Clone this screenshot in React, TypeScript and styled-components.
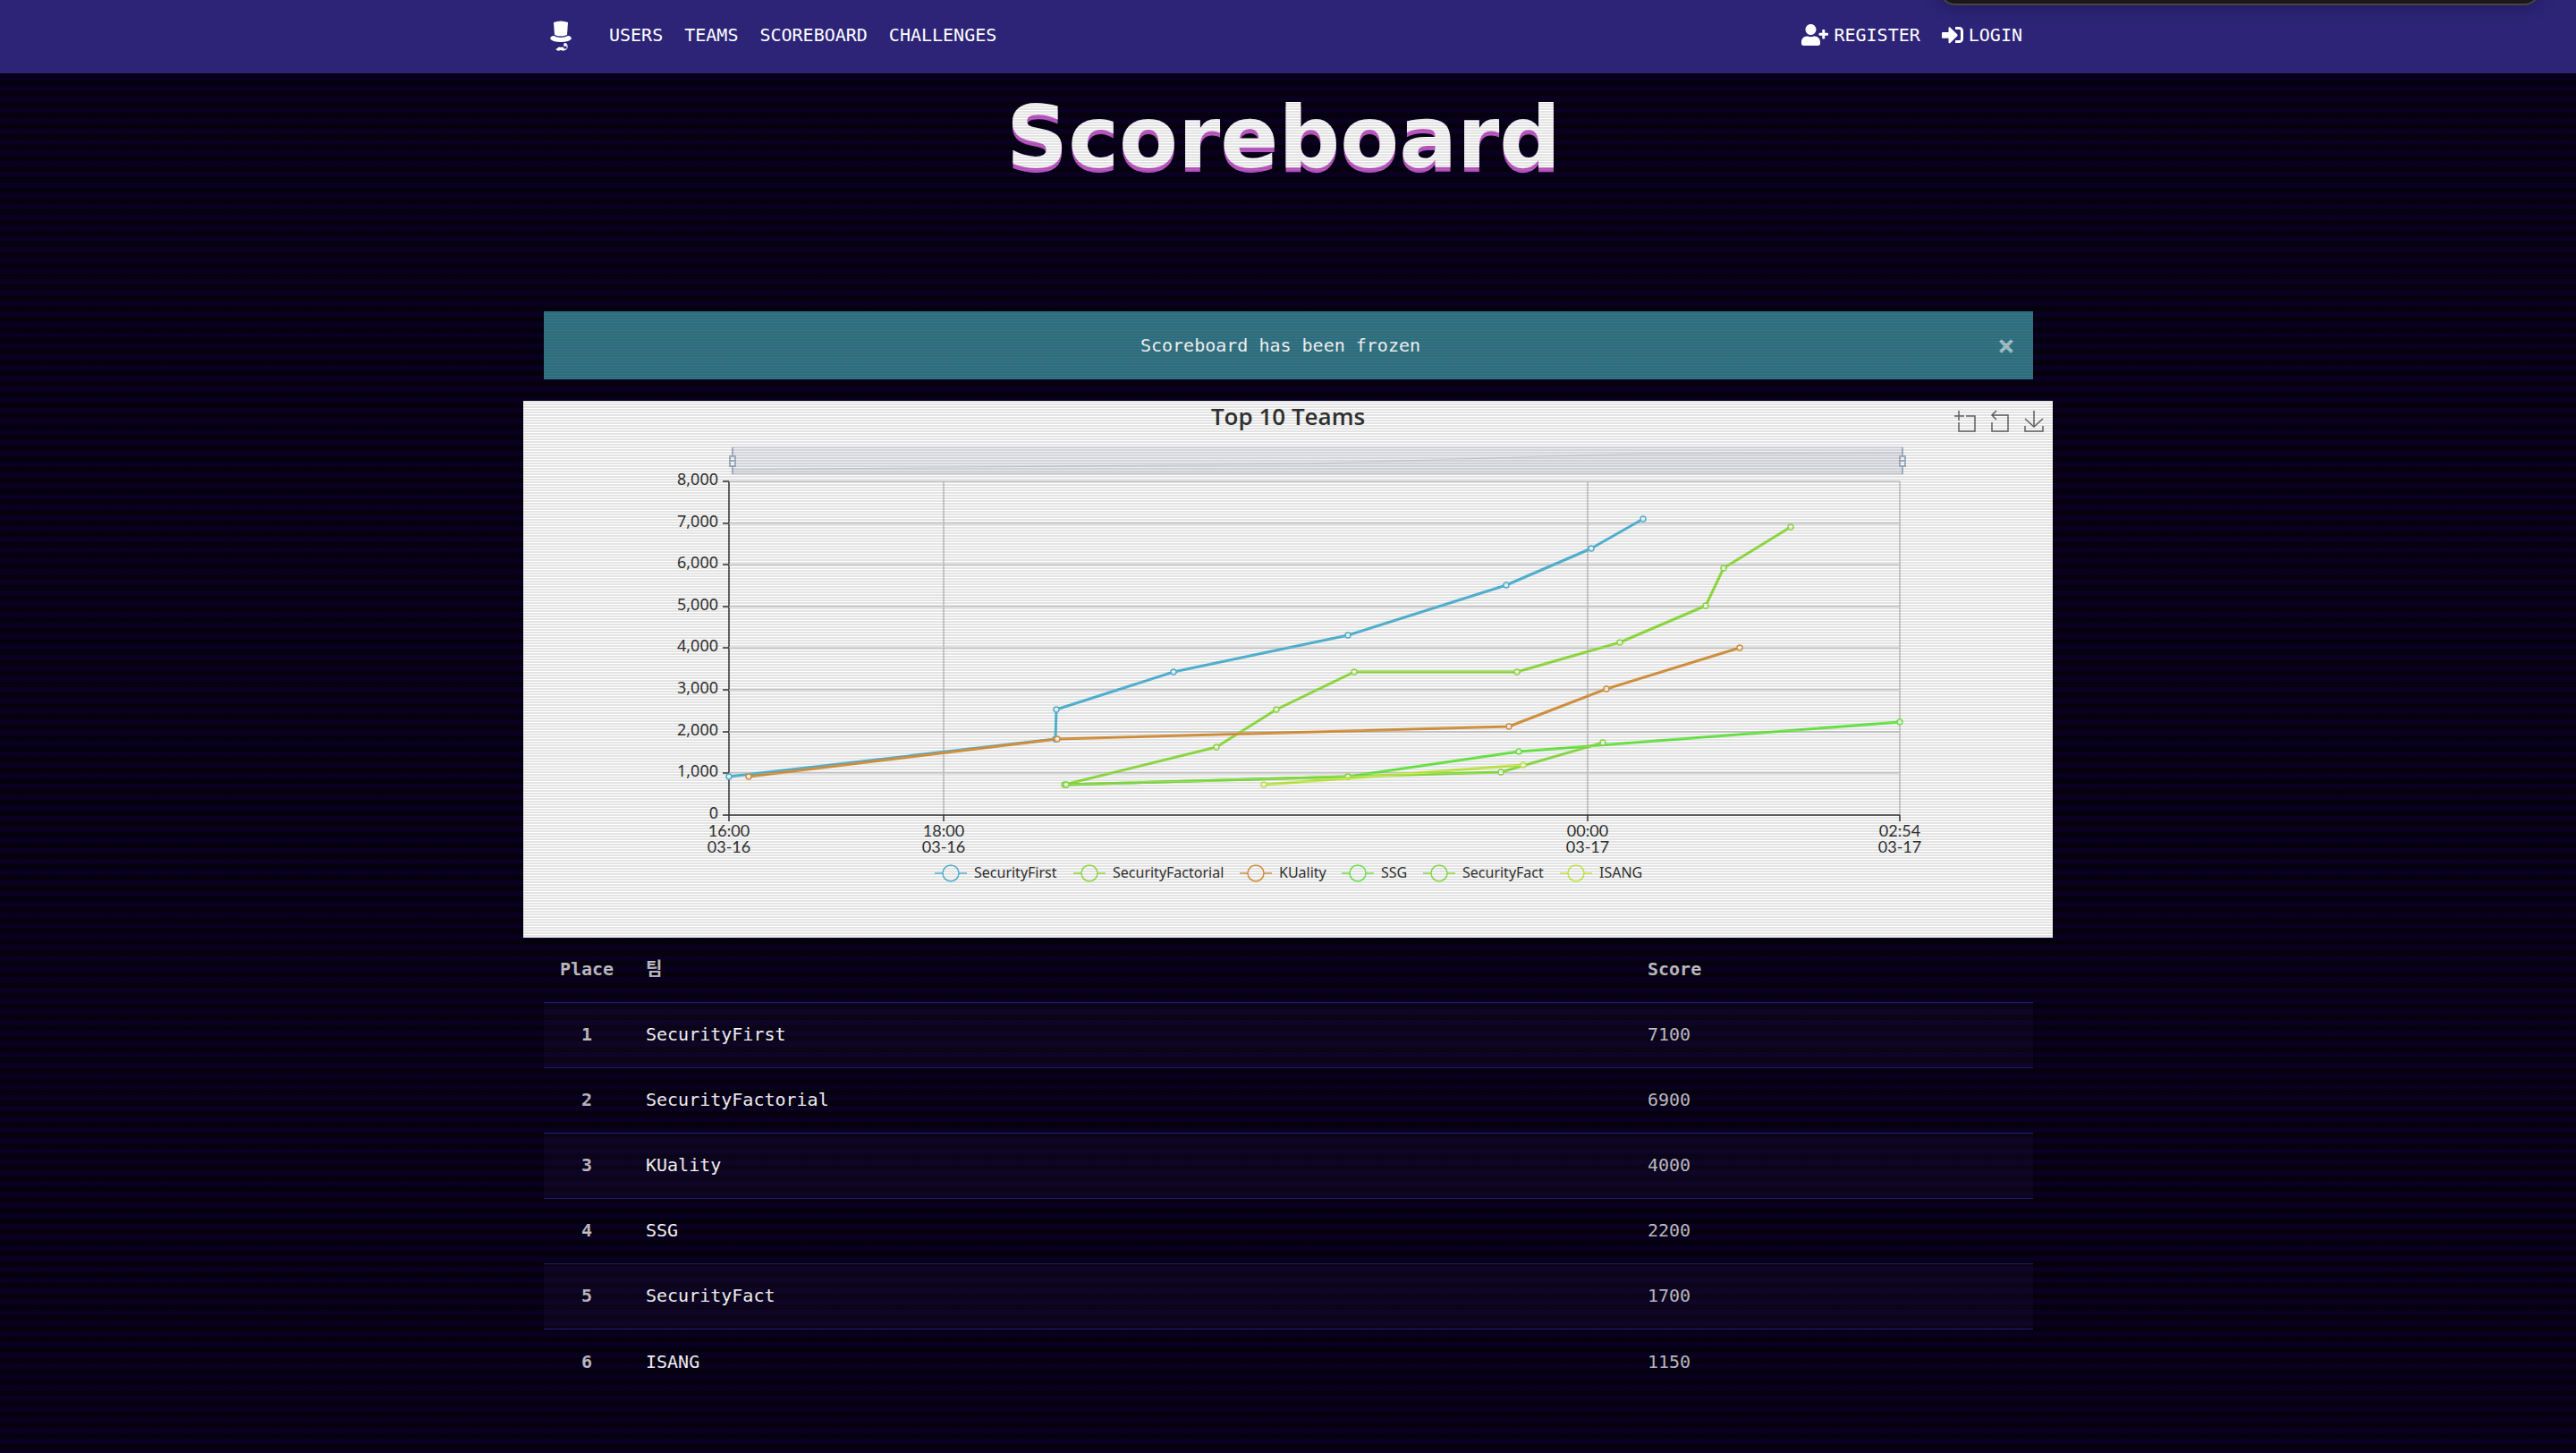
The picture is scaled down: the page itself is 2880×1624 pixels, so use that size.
import React from 'react';
import styled, { createGlobalStyle } from 'styled-components';
import { FaUserPlus, FaSignInAlt } from 'react-icons/fa';

const Global = createGlobalStyle`
  * { box-sizing: border-box; }
  html { min-height: 100%; background: #04010c; }
  body {
    margin: 0;
    min-height: 100vh;
    color: #c6c3ca;
    font: 20px/36px "DejaVu Sans Mono", "Noto Sans CJK KR", monospace;
    background: repeating-linear-gradient(#0a0024 0 6px, #05010f 6px 12px);
  }
`;

const Scanlines = styled.div`
  position: absolute;
  inset: 0;
  z-index: 5;
  pointer-events: none;
  background: repeating-linear-gradient(rgba(0,0,0,0) 0 1px, rgba(0,0,0,.11) 1px 3px);
`;

const Page = styled.div`
  position: relative;
  min-height: 100vh;
  overflow: hidden;
`;

const Nav = styled.nav`
  position: relative;
  z-index: 6;
  background: #2d2478;
  height: 82px;
`;

const NotchPanel = styled.div`
  position: absolute;
  top: -30px;
  right: 40px;
  width: 672px;
  height: 36px;
  border: 2px solid #45424a;
  border-radius: 20px;
  background: #1c1818;
  box-shadow: 0 0 20px rgba(0,0,0,.35);
`;

const Container = styled.div`
  width: 100%;
  max-width: 1710px;
  margin: 0 auto;
`;

const NavInner = styled(Container)`
  display: flex;
  align-items: center;
  padding: 0 34px 4px 26px;
  height: 100%;
`;

const Brand = styled.a`
  display: flex;
  margin: 2px 38px 0 0;
  padding: 0 4px;
  color: #fff;
`;

const Links = styled.div`
  display: flex;
  gap: 24px;
  & + & { margin-left: auto; }
`;

const NavLink = styled.a<{ $iconWidth?: number }>`
  display: flex;
  align-items: center;
  gap: 6px;
  color: #fff;
  text-decoration: none;
  svg { width: ${(p) => p.$iconWidth || 24}px; height: 24px; }
`;

const Title = styled.h1`
  margin: 0;
  padding: 24px 10px 0 0;
  height: 266px;
  text-align: center;
  color: #fff;
  font: bold 96px/96px "DejaVu Sans", sans-serif;
  text-shadow: 0 5px 0 #c25bc9;
`;

const Inset = styled.div`
  padding: 0 22px 0 23px;
`;

const Alert = styled.div`
  display: grid;
  grid-template-columns: 42px 1fr 60px;
  align-items: center;
  height: 76px;
  margin-bottom: 24px;
  text-align: center;
  color: #fff;
  background: #34788a;
`;

const Close = styled.button`
  grid-column: 3;
  padding: 0;
  border: 0;
  background: none;
  color: #a8c8d0;
  font: bold 32px/36px "DejaVu Sans Mono", monospace;
`;

const AlertText = styled.span`
  grid-column: 2;
`;

const ChartPanel = styled.section`
  background: #fff;
  height: 600px;
  svg { display: block; width: 100%; overflow: visible; }
`;

const Table = styled.table`
  width: 100%;
  border-collapse: separate;
  border-spacing: 0;
  th, td {
    height: 73px;
    padding: 0 0 2px;
    text-align: left;
    font-weight: normal;
    border-bottom: 1px solid #261c80;
  }
  th:first-child, td:first-child { width: 96px; text-align: center; }
  td:first-child, th { font-weight: bold; }
  th:nth-child(2), td:nth-child(2) { padding-left: 18px; }
  th:last-child, td:last-child { width: 431px; }
  tbody tr:nth-child(odd) { background: rgba(42,30,80,.16); }
  tbody tr:last-child td { border-bottom: 0; }
`;

const TeamLink = styled.a`
  color: #fff;
  text-decoration: none;
`;

type Series = { name: string; color: string; legendX: number; points: [number, number][] };

const series: Series[] = [
  { name: 'SecurityFirst', color: '#56bcdd', legendX: 478, points: [[230,420],[595,378],[596,345],[727,303],[922,262],[1099,206],[1194,165],[1252,132]] },
  { name: 'SecurityFactorial', color: '#97e646', legendX: 633, points: [[605,429],[775,387],[842,345],[929,303],[1111,303],[1226,270],[1322,229],[1342,187],[1417,141]] },
  { name: 'KUality', color: '#df9a43', legendX: 819, points: [[252,420],[597,378],[1102,364],[1211,322],[1360,276]] },
  { name: 'SSG', color: '#70f24c', legendX: 933, points: [[607,429],[922,420],[1113,392],[1539,359]] },
  { name: 'SecurityFact', color: '#91e64e', legendX: 1024, points: [[607,429],[922,420],[1093,415],[1207,382]] },
  { name: 'ISANG', color: '#caf44e', legendX: 1177, points: [[828,429],[1118,407]] },
];

const Label = styled.text<{ $size?: number }>`
  font: ${(p) => p.$size || 18}px "Noto Sans", sans-serif;
  fill: #333;
`;

const AxisLabel = styled.text`
  font: 18px Lato, sans-serif;
  fill: #333;
`;

const ChartTitle = styled.text`
  font: bold 26px/30px "Open Sans", sans-serif;
  font-weight: 600;
  fill: #333;
`;

const xTicks = [
  { x: 230, time: '16:00', date: '03-16' },
  { x: 470, time: '18:00', date: '03-16' },
  { x: 1190, time: '00:00', date: '03-17' },
  { x: 1539, time: '02:54', date: '03-17' },
];

const yTicks = [8, 7, 6, 5, 4, 3, 2, 1, 0];

function Chart() {
  return (
    <svg viewBox="0 0 1710 600" role="img" aria-label="Top 10 Teams">
      <ChartTitle x="855" y="27" textAnchor="middle">Top 10 Teams</ChartTitle>
      <g fill="none" stroke="#666" strokeWidth="1.5">
        <path d="M1600 17h11M1605 11v11M1605 24v10h18V17h-10" />
        <path d="M1642 24v10h18V16h-18M1647 11l-5 5 5 5" />
        <path d="M1679 28v6h20v-6M1689 11v18M1679 20l10 9 10-9" />
      </g>
      <rect x="234" y="52" width="1308" height="30" fill="#eeeff4" stroke="#d9dbe3" />
      <path d="M234 77L880 70 1250 59 1542 58V81H234z" fill="#e8e9ee" stroke="#d3d5dd" />
      {[234, 1542].map((x) => (
        <g key={x} stroke="#a7b7cc" strokeWidth="2" fill="#fff">
          <path d={'M' + x + ' 52V82'} />
          <path d={'M' + (x - 3) + ' 62h6v11h-6zM' + (x - 3) + ' 67h6'} />
        </g>
      ))}
      {xTicks.map((t, i) => (
        <g key={t.x}>
          <path d={'M' + t.x + ' 90V463'} stroke={i ? '#c4c4c4' : '#333'} strokeWidth="1.5" />
          <path d={'M' + t.x + ' 463V470'} stroke="#333" strokeWidth="1.5" />
          <AxisLabel x={t.x} y="487" textAnchor="middle">
            {t.time}
            <tspan x={t.x} dy="18">{t.date}</tspan>
          </AxisLabel>
        </g>
      ))}
      {yTicks.map((n, i) => {
        const y = 90 + Math.round(i * 46.6);
        return (
          <g key={n}>
            <path d={'M230 ' + y + 'H1539'} stroke={n ? '#ccc' : '#333'} strokeWidth="1.5" />
            <path d={'M223 ' + y + 'H230'} stroke="#333" strokeWidth="1.5" />
            <Label x="218" y={y + 4} textAnchor="end">{n ? n + ',000' : '0'}</Label>
          </g>
        );
      })}
      {series.map((s) => (
        <g key={s.name} stroke={s.color} fill="none">
          <polyline points={s.points.map((p) => p.join(',')).join(' ')} strokeWidth="3" strokeLinejoin="bevel" />
          {s.points.map((p, i) => <circle key={i} cx={p[0]} cy={p[1]} r="3" fill="#fff" strokeWidth="1.5" />)}
        </g>
      ))}
      {series.map((s) => (
        <g key={s.name}>
          <path d={'M' + (s.legendX - 18) + ' 528h36'} stroke={s.color} strokeWidth="1.5" />
          <circle cx={s.legendX} cy="528" r="9" fill="#fff" stroke={s.color} strokeWidth="1.5" />
          <Label $size={16} x={s.legendX + 26} y="533">{s.name}</Label>
        </g>
      ))}
    </svg>
  );
}

const teams = [
  ['SecurityFirst', 7100],
  ['SecurityFactorial', 6900],
  ['KUality', 4000],
  ['SSG', 2200],
  ['SecurityFact', 1700],
  ['ISANG', 1150],
] as const;

export default function App() {
  return (
    <Page>
      <Global />
      <Nav>
        <NotchPanel />
        <NavInner>
          <Brand href="#" aria-label="Home">
            <svg width="24" height="34" viewBox="0 0 24 34" fill="currentColor">
              <path d="M4 2Q12-1 20 2L19 16Q12 19 5 16z" />
              <path d="M0 20Q1 17 4 17 12 21 20 17 23 17 24 20 22 24 12 24 2 24 0 20z" />
              <circle cx="17" cy="27" r="2" />
              <path d="M19 27q1 4-2 6" fill="none" stroke="currentColor" />
              <path d="M6 31q1 2 3-1 2-1 3 0 1-1 3 0 1 3 3 1-1 4-6 2-5 2-6-2z" />
            </svg>
          </Brand>
          <Links>
            <NavLink href="#">USERS</NavLink>
            <NavLink href="#">TEAMS</NavLink>
            <NavLink href="#">SCOREBOARD</NavLink>
            <NavLink href="#">CHALLENGES</NavLink>
          </Links>
          <Links>
            <NavLink href="#" $iconWidth={30}><FaUserPlus />REGISTER</NavLink>
            <NavLink href="#"><FaSignInAlt />LOGIN</NavLink>
          </Links>
        </NavInner>
      </Nav>
      <Title>Scoreboard</Title>
      <Container>
        <Inset>
          <Alert role="alert">
            <AlertText>Scoreboard has been frozen</AlertText>
            <Close aria-label="Close">×</Close>
          </Alert>
        </Inset>
        <ChartPanel><Chart /></ChartPanel>
        <Inset>
          <Table>
            <thead>
              <tr><th>Place</th><th>팀</th><th>Score</th></tr>
            </thead>
            <tbody>
              {teams.map(([name, score], i) => (
                <tr key={name}>
                  <td>{i + 1}</td>
                  <td><TeamLink href="#">{name}</TeamLink></td>
                  <td>{score}</td>
                </tr>
              ))}
            </tbody>
          </Table>
        </Inset>
      </Container>
      <Scanlines />
    </Page>
  );
}
